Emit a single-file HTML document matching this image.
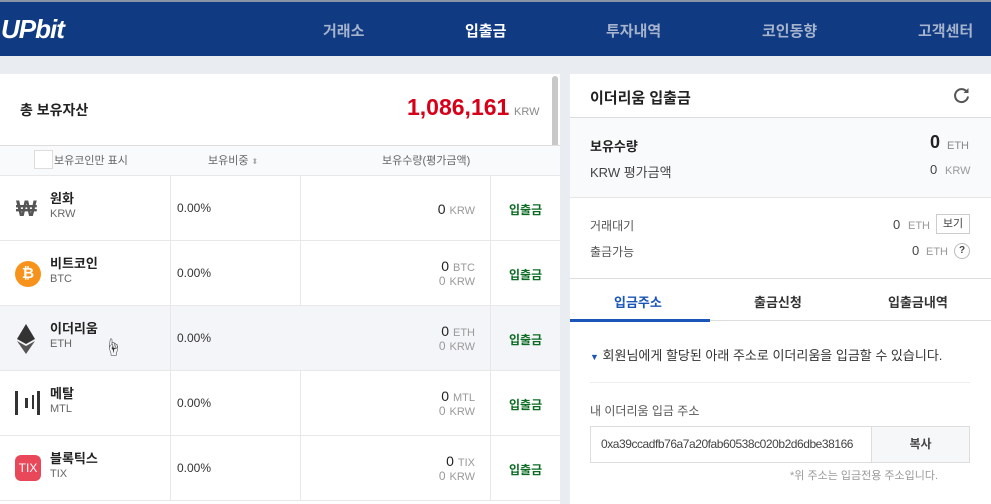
<!DOCTYPE html>
<html><head><meta charset="utf-8"><style>
*{box-sizing:border-box;margin:0;padding:0}
body{width:991px;height:491px;overflow:hidden;background:#e9ecf1;font-family:"Liberation Sans","Noto Sans CJK KR",sans-serif;position:relative;color:#333}
.hdr{position:absolute;left:0;top:0;width:991px;height:56px;background:#103a82;border-top:2px solid #8a93a3}
.logo{position:absolute;left:1px;top:12px;color:#fff;font-size:26px;font-weight:bold;font-style:italic;letter-spacing:-1px;line-height:30px}
.nav{position:absolute;top:18px;color:#a5b3cc;font-size:15px;font-weight:bold}
.a{position:absolute}
.left{position:absolute;left:0;top:74px;width:560px;height:430px;background:#fff;overflow:hidden}
.right{position:absolute;left:570px;top:74px;width:421px;height:430px;background:#fff}
.row{position:absolute;left:0;width:560px;height:65px;border-bottom:1px solid #e8e8e8}
.row .v{position:absolute;top:0;bottom:0;width:1px;background:#e8e8e8}
.nm{position:absolute;left:50px;top:15px;font-size:13px;font-weight:bold;color:#222;line-height:16px}
.sy{position:absolute;left:50px;top:31px;font-size:11px;color:#666;line-height:14px}
.pc{position:absolute;left:177px;top:25px;font-size:12px;color:#333}
.q1{position:absolute;right:85px;top:17px;font-size:14px;color:#222;text-align:right}
.q1 small,.q2 small{font-size:11px;color:#999;margin-left:4px}
.q2{position:absolute;right:85px;top:33px;font-size:12px;color:#999;text-align:right}
.dw{position:absolute;left:509px;top:25px;font-size:12px;font-weight:bold;color:#0b6b22}
</style></head><body>
<div class="hdr">
<div class="logo">UPbit</div>
<div class="nav" style="left:323px">거래소</div>
<div class="nav" style="left:465px;color:#fff">입출금</div>
<div class="nav" style="left:606px">투자내역</div>
<div class="nav" style="left:762px">코인동향</div>
<div class="nav" style="left:918px">고객센터</div>
</div>
<div class="left">
<div class="a" style="left:20px;top:26px;font-size:14px;font-weight:bold;color:#222">총 보유자산</div>
<div class="a" style="left:407px;top:20px;font-size:23px;color:#d60018;font-weight:bold">1,086,161</div>
<div class="a" style="left:514px;top:32px;font-size:11px;color:#888">KRW</div>
<div class="a" style="left:552px;top:2px;width:6px;height:90px;background:#c8c8c8;border-radius:3px"></div>
<div class="a" style="left:0;top:71px;width:560px;height:31px;background:#f9fafc;border-top:1px solid #ddd;border-bottom:1px solid #e8e8e8"></div>
<div class="a" style="left:34px;top:76px;width:19px;height:19px;background:#fff;border:1px solid #ddd"></div>
<div class="a" style="left:54px;top:78px;font-size:11px;color:#666">보유코인만 표시</div>
<div class="a" style="left:208px;top:78px;font-size:11px;color:#666">보유비중 <span style="color:#aaa;font-size:8px">⬍</span></div>
<div class="a" style="left:382px;top:78px;font-size:11px;color:#666">보유수량(평가금액)</div>
<div class="row" style="top:102px"><div class="v" style="left:170px"></div><div class="v" style="left:300px"></div><div class="v" style="left:490px"></div>
<div class="a" style="left:16px;top:20px;font-size:22px;color:#555;font-weight:bold">₩</div>
<div class="nm">원화</div><div class="sy">KRW</div><div class="pc">0.00%</div><div class="q1" style="top:25px">0<small>KRW</small></div><div class="dw">입출금</div></div>
<div class="row" style="top:167px"><div class="v" style="left:170px"></div><div class="v" style="left:300px"></div><div class="v" style="left:490px"></div>
<div class="a" style="left:15px;top:20px;width:26px;height:26px;border-radius:50%;background:#f7931a;color:#fff;font-weight:bold;font-size:15px;text-align:center;line-height:26px">₿</div>
<div class="nm">비트코인</div><div class="sy">BTC</div><div class="pc">0.00%</div><div class="q1">0<small>BTC</small></div><div class="q2">0<small>KRW</small></div><div class="dw">입출금</div></div>
<div class="row" style="top:232px;background:#f4f5f8"><div class="v" style="left:170px"></div><div class="v" style="left:490px"></div>
<svg class="a" style="left:17px;top:18px" width="18" height="30" viewBox="0 0 18 30"><path d="M9 0L0 15L9 20L18 15Z" fill="#333"/><path d="M9 22L0 17L9 30L18 17Z" fill="#555"/></svg>
<div class="nm">이더리움</div><div class="sy">ETH</div><div class="a" style="left:104px;top:28px;font-size:18px">☝</div><div class="pc">0.00%</div><div class="q1">0<small>ETH</small></div><div class="q2">0<small>KRW</small></div><div class="dw">입출금</div></div>
<div class="row" style="top:297px"><div class="v" style="left:170px"></div><div class="v" style="left:300px"></div><div class="v" style="left:490px"></div>
<div class="a" style="left:15px;top:20px;width:3px;height:24px;background:#333"></div><div class="a" style="left:25px;top:27px;width:3px;height:10px;background:#333"></div><div class="a" style="left:32px;top:24px;width:2px;height:14px;background:#333"></div><div class="a" style="left:37px;top:20px;width:3px;height:24px;background:#333"></div>
<div class="nm">메탈</div><div class="sy">MTL</div><div class="pc">0.00%</div><div class="q1">0<small>MTL</small></div><div class="q2">0<small>KRW</small></div><div class="dw">입출금</div></div>
<div class="row" style="top:362px"><div class="v" style="left:170px"></div><div class="v" style="left:300px"></div><div class="v" style="left:490px"></div>
<div class="a" style="left:15px;top:19px;width:26px;height:26px;border-radius:6px;background:#e8485a;color:#fff;font-size:12px;text-align:center;line-height:26px">TIX</div>
<div class="nm">블록틱스</div><div class="sy">TIX</div><div class="pc">0.00%</div><div class="q1">0<small>TIX</small></div><div class="q2">0<small>KRW</small></div><div class="dw">입출금</div></div>
</div>
<div class="right">
<div class="a" style="left:20px;top:13px;font-size:15px;font-weight:bold;color:#222">이더리움 입출금</div>
<svg class="a" style="left:383px;top:13px" width="17" height="17" viewBox="0 0 17 17"><path d="M14 5A6.5 6.5 0 1 0 15 9.5" fill="none" stroke="#555" stroke-width="2"/><path d="M15.5 1V6H10.5Z" fill="#555"/></svg>
<div class="a" style="left:0;top:43px;width:421px;height:81px;background:#f9fafb;border-top:1px solid #ddd;border-bottom:1px solid #e6e6e6"></div>
<div class="a" style="left:20px;top:62px;font-size:13px;font-weight:bold;color:#222">보유수량</div>
<div class="a" style="left:360px;top:58px;font-size:18px;color:#222;font-weight:bold">0</div><div class="a" style="left:377px;top:66px;font-size:11px;color:#888">ETH</div>
<div class="a" style="left:20px;top:88px;font-size:13px;color:#444">KRW 평가금액</div>
<div class="a" style="left:360px;top:88px;font-size:13px;color:#444">0</div><div class="a" style="left:375px;top:91px;font-size:11px;color:#999">KRW</div>
<div class="a" style="left:20px;top:143px;font-size:12px;color:#555">거래대기</div>
<div class="a" style="left:323px;top:143px;font-size:13px;color:#444">0</div><div class="a" style="left:338px;top:146px;font-size:11px;color:#999">ETH</div>
<div class="a" style="left:366px;top:140px;width:34px;height:20px;border:1px solid #ccc;font-size:11px;text-align:center;line-height:18px;color:#444">보기</div>
<div class="a" style="left:20px;top:169px;font-size:12px;color:#555">출금가능</div>
<div class="a" style="left:342px;top:169px;font-size:13px;color:#444">0</div><div class="a" style="left:356px;top:172px;font-size:11px;color:#999">ETH</div>
<div class="a" style="left:384px;top:169px;width:16px;height:16px;border:1px solid #bbb;border-radius:50%;font-size:10px;font-weight:bold;text-align:center;line-height:14px;color:#444">?</div>
<div class="a" style="left:0;top:204px;width:421px;height:1px;background:#ddd"></div>
<div class="a" style="left:44px;top:218px;font-size:13px;font-weight:bold;color:#1a56b8">입금주소</div>
<div class="a" style="left:184px;top:218px;font-size:13px;font-weight:bold;color:#333">출금신청</div>
<div class="a" style="left:318px;top:218px;font-size:13px;font-weight:bold;color:#333">입출금내역</div>
<div class="a" style="left:0;top:246px;width:421px;height:1px;background:#ddd"></div>
<div class="a" style="left:0;top:245px;width:140px;height:3px;background:#1a56b8"></div>
<div class="a" style="left:20px;top:271px;font-size:13px;color:#333"><span style="color:#1a56b8;font-size:9px">▼</span> 회원님에게 할당된 아래 주소로 이더리움을 입금할 수 있습니다.</div>
<div class="a" style="left:20px;top:308px;width:380px;height:1px;background:#eee"></div>
<div class="a" style="left:20px;top:328px;font-size:12px;color:#555">내 이더리움 입금 주소</div>
<div class="a" style="left:20px;top:352px;width:380px;height:37px;border:1px solid #ddd"></div>
<div class="a" style="left:301px;top:353px;width:98px;height:35px;background:#f6f7f9;border-left:1px solid #ddd;text-align:center;line-height:35px;font-size:12px;font-weight:bold;color:#444">복사</div>
<div class="a" style="left:31px;top:363px;font-size:12px;color:#444;letter-spacing:-0.45px;white-space:nowrap">0xa39ccadfb76a7a20fab60538c020b2d6dbe38166</div>
<div class="a" style="left:220px;top:393px;font-size:11px;color:#999">*위 주소는 입금전용 주소입니다.</div>
</div>
</body></html>
